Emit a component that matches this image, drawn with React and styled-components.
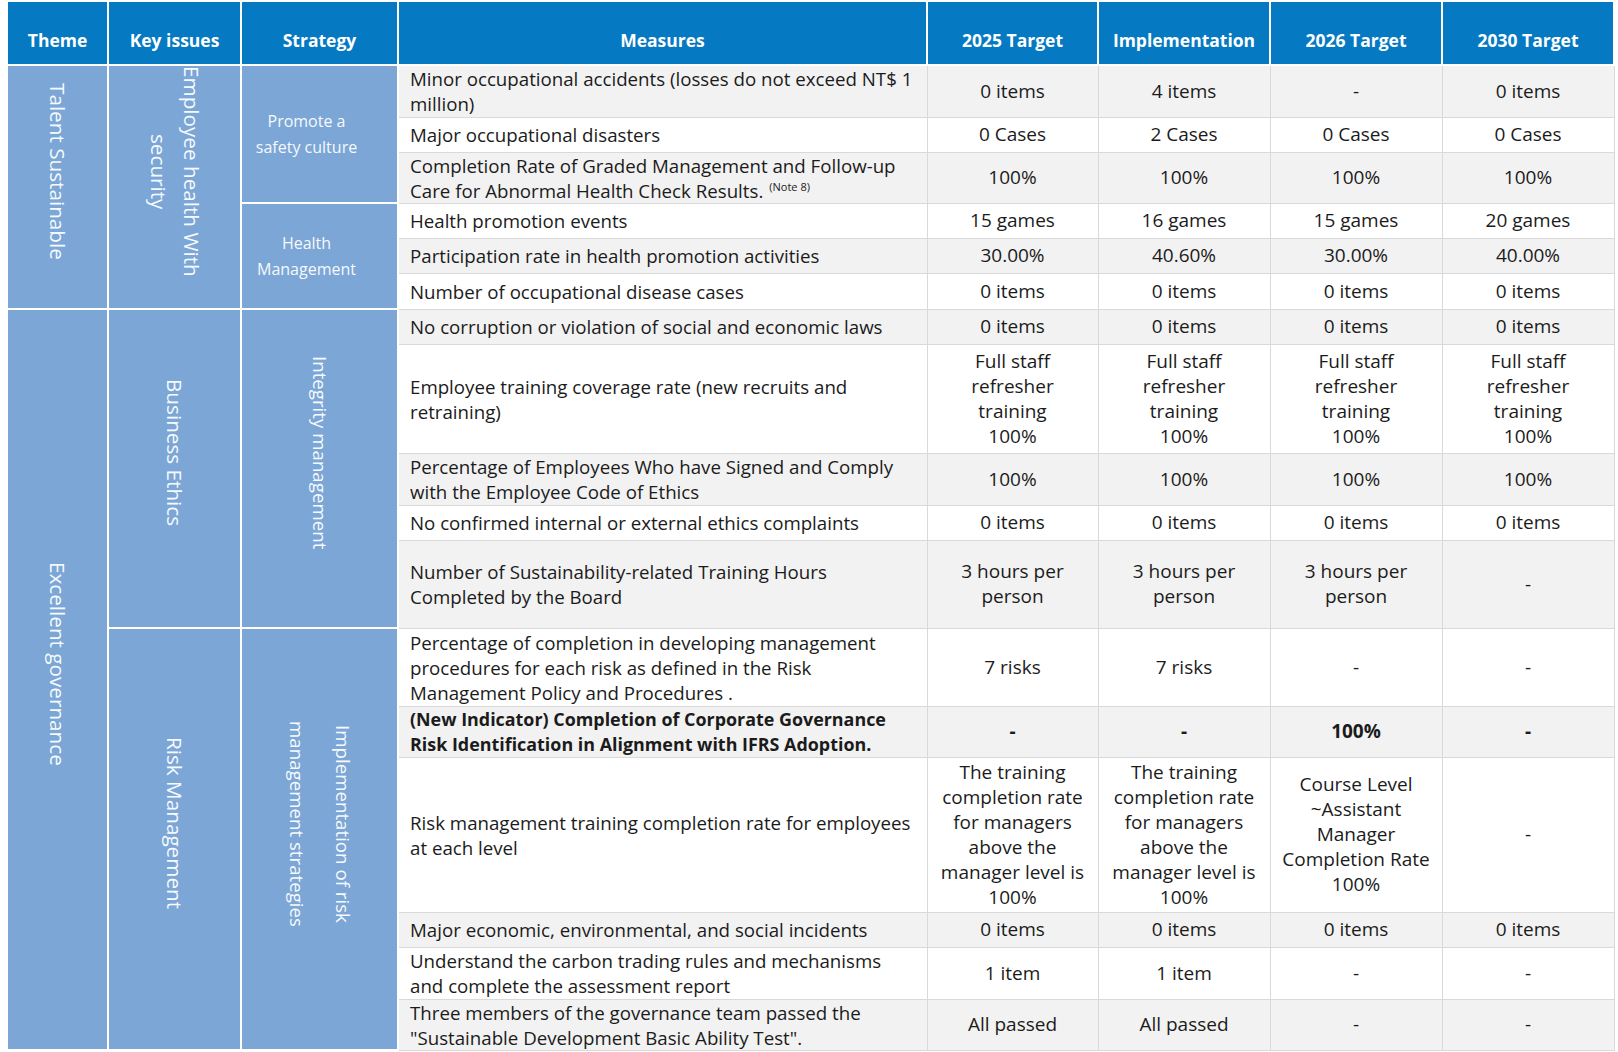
import styled, { createGlobalStyle } from "styled-components";

const GlobalStyle = createGlobalStyle`
  body {
    margin: 0;
    background: #ffffff;
    font-family: "Open Sans", "Liberation Sans", sans-serif;
    color: #1b1b1b;
  }
`;

const columns = [101, 133, 157, 529, 171, 172, 172, 172];
const headings = [
  "Theme",
  "Key issues",
  "Strategy",
  "Measures",
  "2025 Target",
  "Implementation",
  "2026 Target",
  "2030 Target",
];

const rows = [
  { h: 52, m: "Minor occupational accidents (losses do not exceed NT$ 1\nmillion)", v: ["0 items", "4 items", "-", "0 items"] },
  { h: 35, m: "Major occupational disasters", v: ["0 Cases", "2 Cases", "0 Cases", "0 Cases"] },
  { h: 51, m: "Completion Rate of Graded Management and Follow-up\nCare for Abnormal Health Check Results.", note: "(Note 8)", v: ["100%", "100%", "100%", "100%"] },
  { h: 35, m: "Health promotion events", v: ["15 games", "16 games", "15 games", "20 games"] },
  { h: 35, m: "Participation rate in health promotion activities", v: ["30.00%", "40.60%", "30.00%", "40.00%"] },
  { h: 36, m: "Number of occupational disease cases", v: ["0 items", "0 items", "0 items", "0 items"] },
  { h: 35, m: "No corruption or violation of social and economic laws", v: ["0 items", "0 items", "0 items", "0 items"] },
  { h: 109, m: "Employee training coverage rate (new recruits and\nretraining)", v: Array(4).fill("Full staff\nrefresher\ntraining\n100%") },
  { h: 52, m: "Percentage of Employees Who have Signed and Comply\nwith the Employee Code of Ethics", v: ["100%", "100%", "100%", "100%"] },
  { h: 35, m: "No confirmed internal or external ethics complaints", v: ["0 items", "0 items", "0 items", "0 items"] },
  { h: 88, m: "Number of Sustainability-related Training Hours\nCompleted by the Board", v: ["3 hours per\nperson", "3 hours per\nperson", "3 hours per\nperson", "-"] },
  { h: 78, m: "Percentage of completion in developing management\nprocedures for each risk as defined in the Risk\nManagement Policy and Procedures .", v: ["7 risks", "7 risks", "-", "-"] },
  { h: 51, bold: true, m: "(New Indicator) Completion of Corporate Governance\nRisk Identification in Alignment with IFRS Adoption.", v: ["-", "-", "100%", "-"] },
  {
    h: 155,
    m: "Risk management training completion rate for employees\nat each level",
    v: [
      "The training\ncompletion rate\nfor managers\nabove the\nmanager level is\n100%",
      "The training\ncompletion rate\nfor managers\nabove the\nmanager level is\n100%",
      "Course Level\n~Assistant\nManager\nCompletion Rate\n100%",
      "-",
    ],
  },
  { h: 35, m: "Major economic, environmental, and social incidents", v: ["0 items", "0 items", "0 items", "0 items"] },
  { h: 52, m: "Understand the carbon trading rules and mechanisms\nand complete the assessment report", v: ["1 item", "1 item", "-", "-"] },
  { h: 51, m: "Three members of the governance team passed the\n\"Sustainable Development Basic Ability Test\".", v: ["All passed", "All passed", "-", "-"] },
];

// blue merged cells on the left, keyed by the row they start on
const sideCells = {
  0: [
    { span: 6, text: "Talent Sustainable", vertical: true },
    { span: 6, text: "Employee health With\nsecurity", vertical: true, lh: 33 },
    { span: 3, text: "Promote a\nsafety culture" },
  ],
  3: [{ span: 3, text: "Health\nManagement" }],
  6: [
    { span: 11, text: "Excellent governance", vertical: true },
    { span: 5, text: "Business Ethics", vertical: true },
    { span: 5, text: "Integrity management", vertical: true, small: true },
  ],
  11: [
    { span: 6, text: "Risk Management", vertical: true },
    { span: 6, text: "Implementation of risk\nmanagement strategies", vertical: true, small: true, lh: 46 },
  ],
};

const App = () => {
  return (
    <Page>
      <GlobalStyle />
      <Table>
        <colgroup>
          {columns.map((w, i) => (
            <col key={i} style={{ width: w }} />
          ))}
        </colgroup>
        <thead>
          <HeadRow>
            {headings.map((t) => (
              <HeadCell key={t}>{t}</HeadCell>
            ))}
          </HeadRow>
        </thead>
        <tbody>
          {rows.map((row, i) => (
            <BodyRow key={i} $h={row.h} $striped={i % 2 === 0}>
              {(sideCells[i] || []).map((c, j) =>
                c.vertical ? (
                  <SideCell key={j} rowSpan={c.span} $vertical>
                    <VerticalText $lh={c.lh} $small={c.small}>
                      {c.text}
                    </VerticalText>
                  </SideCell>
                ) : (
                  <SideCell key={j} rowSpan={c.span}>
                    <StrategyText>{c.text}</StrategyText>
                  </SideCell>
                )
              )}
              <MeasureCell $bold={row.bold}>
                {row.m}
                {row.note && <Note>{row.note}</Note>}
              </MeasureCell>
              {row.v.map((v, k) => (
                <ValueCell key={k} $bold={row.bold}>
                  {v}
                </ValueCell>
              ))}
            </BodyRow>
          ))}
        </tbody>
      </Table>
    </Page>
  );
};

const Page = styled.div`
  padding: 2px 0 0 6px;
`;

const Table = styled.table`
  width: 1607px;
  table-layout: fixed;
  border-collapse: collapse;
`;

const HeadRow = styled.tr`
  height: 63px;
  background: #0579c1;
`;

const HeadCell = styled.th`
  border: 2px solid #ffffff;
  border-top: none;
  color: #ffffff;
  font-size: 17.5px;
  font-weight: 700;
  text-align: center;
  vertical-align: bottom;
  padding: 0 4px 12px;
  white-space: nowrap;
`;

const BodyRow = styled.tr`
  height: ${(p) => p.$h}px;
  background: ${(p) => (p.$striped ? "#f2f2f2" : "#ffffff")};
`;

const SideCell = styled.td`
  background: #7ba6d5;
  border: 2px solid #ffffff;
  color: #f6f9fd;
  text-align: center;
  vertical-align: middle;
  padding: ${(p) => (p.$vertical ? "0 0 26px" : "0 26px 0 0")};
`;

const VerticalText = styled.div`
  display: inline-block;
  writing-mode: vertical-rl;
  white-space: pre-line;
  text-align: center;
  font-size: ${(p) => (p.$small ? 18.7 : 20.7)}px;
  line-height: ${(p) => p.$lh || 30}px;
  font-weight: 400;
`;

const StrategyText = styled.div`
  white-space: pre-line;
  font-size: 16px;
  line-height: 26px;
  font-weight: 400;
`;

const MeasureCell = styled.td`
  border: 1px solid #d9d9d9;
  padding: 0 3px 0 11px;
  vertical-align: middle;
  white-space: pre-line;
  font-size: ${(p) => (p.$bold ? 17.9 : 18.7)}px;
  line-height: 25px;
  font-weight: ${(p) => (p.$bold ? 700 : 400)};
  color: #1b1b1b;
`;

const Note = styled.sup`
  display: inline-block;
  font-size: 11px;
  line-height: 12px;
  margin-left: 6px;
  vertical-align: 7px;
`;

const ValueCell = styled.td`
  border: 1px solid #d9d9d9;
  padding: 0 4px;
  text-align: center;
  vertical-align: middle;
  white-space: pre-line;
  font-size: 19px;
  font-stretch: 93%;
  line-height: 25px;
  font-weight: ${(p) => (p.$bold ? 700 : 400)};
  color: #1b1b1b;
`;

export default App;
